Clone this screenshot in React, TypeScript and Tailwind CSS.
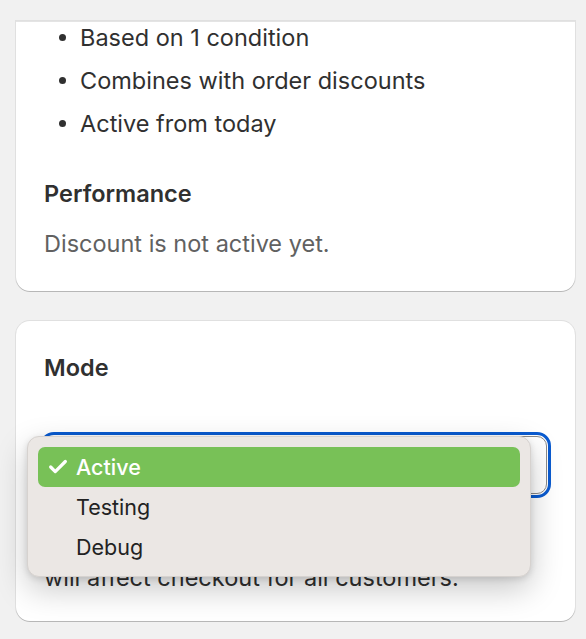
import { Check } from "lucide-react";

const summary = ["Based on 1 condition", "Combines with order discounts", "Active from today"];

const modes = ["Active", "Testing", "Debug"];

const App = () => {
  return (
    <div
      className="w-[586px] h-[639px] overflow-hidden bg-[#f1f1f1] text-[#303030]"
      style={{ fontFamily: "Inter, 'Liberation Sans', sans-serif" }}
    >
      {/* top strip */}
      <div className="h-[21px] bg-[#f1f1f1]" />

      {/* Summary card (scrolled) */}
      <div className="ml-[16px] w-[559px] bg-white border-t border-[#e4e4e4] rounded-b-[14px] shadow-[0_1px_0_0_rgba(0,0,0,0.18),0_0_0_1px_rgba(0,0,0,0.07)] px-[28px] pb-[32px]">
        <ul className="-mt-[6px]">
          {summary.map((item, i) => (
            <li key={i} className="flex items-center h-[43px] text-[23.5px]">
              <span className="w-[7px] h-[7px] rounded-full bg-[#303030] ml-[15px] mr-[14px]" />
              <span>{item}</span>
            </li>
          ))}
        </ul>
        <h3 className="mt-[34px] text-[23.5px] font-semibold leading-[30px]">Performance</h3>
        <p className="mt-[20px] text-[23.5px] leading-[30px] text-[#616161]">Discount is not active yet.</p>
      </div>

      {/* Mode card */}
      <div className="relative mt-[30px] ml-[16px] w-[559px] h-[300px] bg-white rounded-[14px] shadow-[0_1px_0_0_rgba(0,0,0,0.18),0_0_0_1px_rgba(0,0,0,0.07)] px-[28px] pt-[32px]">
        <h3 className="text-[23.5px] font-semibold leading-[30px]">Mode</h3>
        <div className="mt-[53px] h-[58px] w-[503px] rounded-[10px] border border-[#8a8a8a] bg-white outline-[3px] outline-offset-[1px] outline-[#0a5bd0]" />
        <p className="mt-[39px] text-[23.5px] leading-[30px]">
          Active mode runs this discount live, so it
          <br />
          will affect checkout for all customers.
        </p>

        {/* native select menu */}
        <div className="absolute left-[11px] top-[115px] w-[504px] h-[141px] rounded-[12px] bg-[#ebe7e4] border border-[#d6d2cf] shadow-[0_12px_32px_rgba(0,0,0,0.22),0_2px_6px_rgba(0,0,0,0.12)] px-[10px] py-[10px]">
          {modes.map((mode, i) => (
            <div
              key={mode}
              className={
                i === 0
                  ? "flex items-center h-[40px] rounded-[7px] bg-[#78c157] text-white font-medium text-[21.5px]"
                  : "flex items-center h-[40px] text-[#222222] text-[21.5px]"
              }
            >
              <span className="w-[38px] flex justify-center">
                {i === 0 && <Check className="w-[22px] h-[22px] ml-[1px]" strokeWidth={3.5} />}
              </span>
              <span>{mode}</span>
            </div>
          ))}
        </div>
      </div>
    </div>
  );
};

export default App;
